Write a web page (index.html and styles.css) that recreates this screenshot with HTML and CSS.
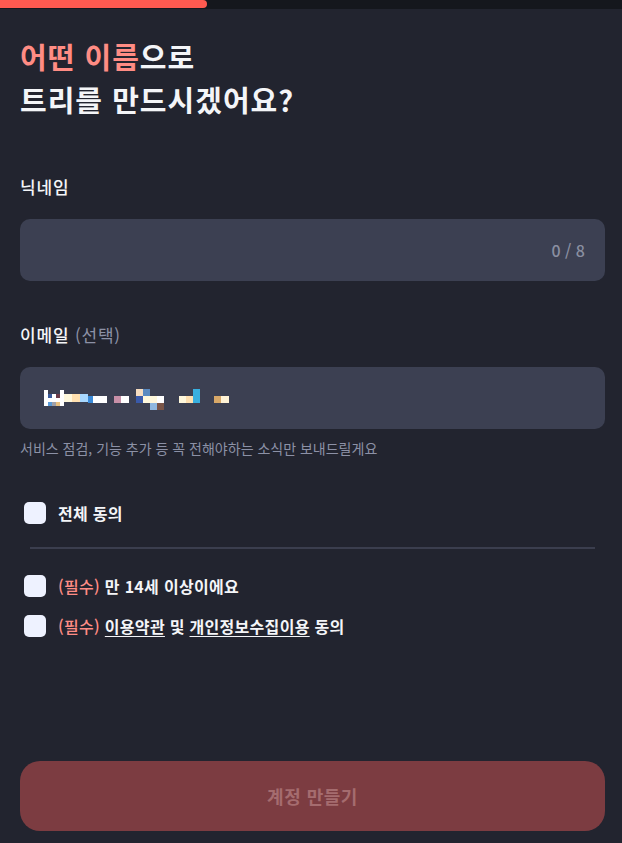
FILE: index.html
```html
<!DOCTYPE html>
<html lang="ko">
<head>
  <meta charset="UTF-8">
  <meta name="viewport" content="width=device-width, initial-scale=1.0">
  <title>트리 만들기</title>
  <link rel="stylesheet" href="styles.css">
</head>
<body>

  <div class="progress"><div class="progress-fill"></div></div>

  <main class="page">
    <h1 class="title"><span class="accent">어떤 이름</span>으로<br>트리를 만드시겠어요?</h1>

    <label class="label">닉네임</label>
    <div class="field">
      <span class="counter">0 / 8</span>
    </div>

    <label class="label label-email">이메일 <span class="optional">(선택)</span></label>
    <div class="field">
      <svg class="mosaic" width="190" height="24" viewBox="0 0 190 24">
        <rect x="0" y="2" width="4" height="16" fill="#ffffff"/>
        <rect x="4" y="6" width="4" height="4" fill="#3a5a9a"/>
        <rect x="8" y="6" width="4" height="4" fill="#ffffff"/>
        <rect x="12" y="6" width="4" height="4" fill="#6b3a48"/>
        <rect x="16" y="2" width="4" height="16" fill="#ffffff"/>
        <rect x="4" y="10" width="12" height="4" fill="#ffffff"/>
        <rect x="4" y="14" width="4" height="4" fill="#5a9ad6"/>
        <rect x="8" y="14" width="4" height="4" fill="#a0a0a8"/>
        <rect x="12" y="14" width="4" height="4" fill="#e8c080"/>
        <rect x="20" y="6" width="8" height="8" fill="#fff8dc"/>
        <rect x="28" y="6" width="8" height="8" fill="#ffe0b0"/>
        <rect x="36" y="6" width="8" height="8" fill="#a8d8ff"/>
        <rect x="44" y="8" width="5" height="7" fill="#3a8ad8"/>
        <rect x="49" y="8" width="14" height="7" fill="#ffffff"/>
        <rect x="70" y="8" width="7" height="7" fill="#c890a8"/>
        <rect x="77" y="8" width="8" height="7" fill="#ffffff"/>
        <rect x="92" y="1" width="7" height="7" fill="#f5dcc0"/>
        <rect x="99" y="1" width="7" height="7" fill="#5a8ac0"/>
        <rect x="92" y="8" width="7" height="7" fill="#3a5aaa"/>
        <rect x="99" y="8" width="14" height="7" fill="#fff8dc"/>
        <rect x="113" y="8" width="7" height="7" fill="#ffffff"/>
        <rect x="106" y="15" width="7" height="7" fill="#90b8e0"/>
        <rect x="113" y="15" width="7" height="7" fill="#7a5548"/>
        <rect x="135" y="8" width="7" height="7" fill="#fff8dc"/>
        <rect x="142" y="8" width="7" height="7" fill="#ffe0b0"/>
        <rect x="149" y="1" width="7" height="14" fill="#38b0e0"/>
        <rect x="170" y="8" width="7" height="7" fill="#d8a868"/>
        <rect x="177" y="8" width="8" height="7" fill="#fff3d6"/>
      </svg>
    </div>
    <p class="helper">서비스 점검, 기능 추가 등 꼭 전해야하는 소식만 보내드릴게요</p>

    <div class="check-row check-all">
      <span class="checkbox"></span>
      <span>전체 동의</span>
    </div>

    <hr class="divider">

    <div class="check-row">
      <span class="checkbox"></span>
      <span><span class="required">(필수)</span> 만 14세 이상이에요</span>
    </div>
    <div class="check-row">
      <span class="checkbox"></span>
      <span><span class="required">(필수)</span> <a href="#">이용약관</a> 및 <a href="#">개인정보수집이용</a> 동의</span>
    </div>

    <button class="submit" disabled>계정 만들기</button>
  </main>

</body>
</html>
```

FILE: styles.css
```css
* {
  box-sizing: border-box;
}
body {
  margin: 0;
  background-color: #22242f;
  color: #f4f5f8;
  font-family: "Noto Sans CJK KR", "Noto Sans", sans-serif;
}
.progress {
  height: 9px;
  background-color: #15171d;
}
.progress-fill {
  width: 207px;
  height: 8px;
  background-color: #ff5a50;
  border-radius: 0 5px 5px 0;
}
.page {
  display: flex;
  flex-direction: column;
  min-height: 834px;
  padding: 0 17px 12px 20px;
}
.title {
  margin: 26px 0 0;
  font-size: 29px;
  line-height: 43px;
  font-weight: 700;
  letter-spacing: 1px;
}
.accent {
  color: #ff8c84;
}
.label {
  display: block;
  margin-top: 54px;
  font-size: 17px;
  font-weight: 500;
  line-height: 24px;
  letter-spacing: 0.8px;
}
.label-email {
  margin-top: 42px;
}
.optional {
  color: #8c91a6;
  font-weight: 400;
}
.field {
  display: flex;
  align-items: center;
  height: 62px;
  margin-top: 20px;
  padding: 0 20px 0 24px;
  background-color: #3c4052;
  border-radius: 10px;
}
.counter {
  margin-left: auto;
  color: #8a8fa1;
  font-size: 16px;
  font-weight: 500;
}
.mosaic {
  display: block;
  margin-top: 3px;
}
.helper {
  margin: 9px 0 0;
  color: #8c91a6;
  font-size: 14px;
  line-height: 20px;
}
.check-row {
  display: flex;
  align-items: center;
  gap: 12px;
  margin-top: 18px;
  padding-left: 4px;
  font-size: 16px;
  font-weight: 700;
  line-height: 22px;
  letter-spacing: 0.3px;
}
.check-all {
  margin-top: 44px;
}
.checkbox {
  width: 22px;
  height: 22px;
  flex-shrink: 0;
  background-color: #eef2ff;
  border-radius: 5px;
}
.divider {
  margin: 23px 10px 8px;
  border: none;
  height: 2px;
  background-color: #3b3e4e;
}
.required {
  color: #ff8c84;
  font-weight: 500;
}
.check-row a {
  color: #f4f5f8;
  text-decoration: underline;
  text-underline-offset: 3px;
}
.submit {
  margin-top: auto;
  height: 70px;
  border: none;
  border-radius: 20px;
  background-color: #7c3c41;
  color: #a56c6f;
  font-family: inherit;
  font-size: 18px;
  font-weight: 700;
  letter-spacing: 0.5px;
}
```
